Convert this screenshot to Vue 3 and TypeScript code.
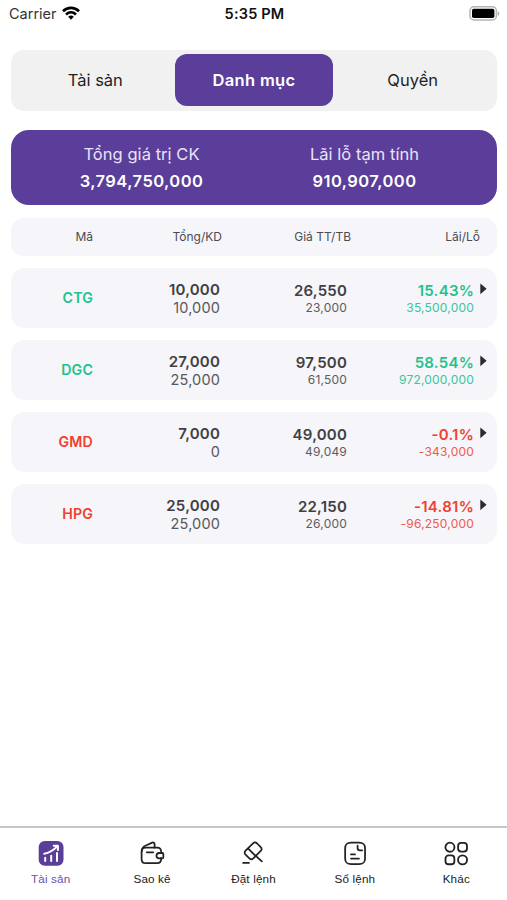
<script setup lang="ts">
import { ref } from 'vue'

interface Holding {
  code: string
  total: string
  available: string
  price: string
  average: string
  percent: string
  profit: string
  up: boolean
}

const segments: string[] = ['Tài sản', 'Danh mục', 'Quyền']
const activeSegment = ref(1)

const holdings: Holding[] = [
  { code: 'CTG', total: '10,000', available: '10,000', price: '26,550', average: '23,000', percent: '15.43%', profit: '35,500,000', up: true },
  { code: 'DGC', total: '27,000', available: '25,000', price: '97,500', average: '61,500', percent: '58.54%', profit: '972,000,000', up: true },
  { code: 'GMD', total: '7,000', available: '0', price: '49,000', average: '49,049', percent: '-0.1%', profit: '-343,000', up: false },
  { code: 'HPG', total: '25,000', available: '25,000', price: '22,150', average: '26,000', percent: '-14.81%', profit: '-96,250,000', up: false },
]

const tabs = [
  { id: 'assets', label: 'Tài sản' },
  { id: 'statement', label: 'Sao kê' },
  { id: 'order', label: 'Đặt lệnh' },
  { id: 'book', label: 'Sổ lệnh' },
  { id: 'more', label: 'Khác' },
]
const activeTab = ref('assets')
</script>

<template>
  <div class="screen">
    <header class="status">
      <div class="carrier">
        <span>Carrier</span>
        <svg width="18" height="14" viewBox="0 0 18 14" fill="none" stroke="#000" stroke-width="2.6">
          <path d="M1 5.2C5.5.8 12.5.8 17 5.2" />
          <path d="M4 8.5C7 5.7 11 5.7 14 8.5" />
          <path d="M6.2 10.8C8 9.2 10 9.2 11.8 10.8L9 13.7Z" fill="#000" stroke="none" />
        </svg>
      </div>
      <span class="time">5:35 PM</span>
      <svg class="battery" width="31" height="15" viewBox="0 0 31 15">
        <rect x="1" y=".8" width="26.4" height="13.2" rx="4" fill="#fff" stroke="#b4b4b4" stroke-width="1.5" />
        <rect x="3" y="2.8" width="22.4" height="9.2" rx="1.8" fill="#000" />
        <path d="M28.8 5.2c2 .8 2 3.8 0 4.6Z" fill="#aaa" />
      </svg>
    </header>

    <nav class="segments">
      <button v-for="(s, i) in segments" :key="s" class="segment" :class="{ active: i === activeSegment }" @click="activeSegment = i">{{ s }}</button>
    </nav>

    <section class="summary">
      <div class="figure">
        <span class="figure-label">Tổng giá trị CK</span>
        <strong class="figure-value">3,794,750,000</strong>
      </div>
      <div class="figure">
        <span class="figure-label">Lãi lỗ tạm tính</span>
        <strong class="figure-value">910,907,000</strong>
      </div>
    </section>

    <div class="head">
      <span>Mã</span><span>Tổng/KD</span><span>Giá TT/TB</span><span>Lãi/Lỗ</span>
    </div>

    <main class="list">
      <article v-for="h in holdings" :key="h.code" class="row" :class="h.up ? 'up' : 'down'">
        <span class="code">{{ h.code }}</span>
        <div class="cell volume">
          <b>{{ h.total }}</b>
          <span>{{ h.available }}</span>
        </div>
        <div class="cell">
          <b>{{ h.price }}</b>
          <small>{{ h.average }}</small>
        </div>
        <div class="cell result">
          <b>{{ h.percent }}</b>
          <small>{{ h.profit }}</small>
        </div>
        <svg class="arrow" width="7" height="12" viewBox="0 0 7 12"><path d="M.3 .6L6.6 5.8L.3 11.2Z" fill="#29292e" /></svg>
      </article>
    </main>

    <footer class="tabs">
      <button v-for="t in tabs" :key="t.id" class="tab" :class="{ current: t.id === activeTab }" @click="activeTab = t.id">
        <svg v-if="t.id === 'assets'" class="icon" viewBox="0 0 26 26">
          <rect x=".7" y=".9" width="24.8" height="24.8" rx="6" fill="#5b3e99" />
          <g fill="none" stroke="#fff" stroke-width="2" stroke-linecap="round">
            <path d="M7.2 17.8v3.2M13.2 15.8v5.2M19 13v8" />
            <path d="M6.2 13.8C11 12.9 15.3 10.4 19.3 6.4M15.7 5.7h4.2v4.2" stroke-linejoin="round" />
          </g>
        </svg>
        <svg v-else-if="t.id === 'statement'" class="icon line" viewBox="-1 -1.5 28 28">
          <path d="M22.8 12.3v-1.5c0-2.5-1.5-4-4-4H6c-2.6 0-4.2 1.6-4.2 4.2v8.2c0 2.7 1.5 4.3 4.2 4.3h12.7c2.6 0 4.1-1.5 4.1-4.2v-1.5" />
          <path d="M2 10.5C2.2 6.5 4 5.3 7 4.2l6.2-2.9c1.5-.5 2.6.4 2.6 2v3.3M7.4 11.8h6.9M24.2 12.5h-3.4c-4 .3-4 5.6 0 5.8h3.4c.7 0 1-.5 1-1.2v-3.4c0-.8-.3-1.2-1-1.2Z" />
        </svg>
        <svg v-else-if="t.id === 'order'" class="icon line" viewBox="-1 -1.5 28 28">
          <path d="M13 2.1 5 10c-1.4 1.4-1.4 2.8 0 4.2l4.1 4.1c1.4 1.4 2.8 1.4 4.2 0l8-8c1.4-1.4 1.4-2.8 0-4.2l-4.1-4.1c-1.4-1.3-2.9-1.3-4.2.1ZM7.6 7.6l8.6 8.4M15.7 15.3l6.8 6.2M2.4 23.2h6.2" />
        </svg>
        <svg v-else-if="t.id === 'book'" class="icon line" viewBox="-1 -1.5 28 28">
          <path d="M9 1.2h8.2c4.9 0 6.6 1.8 6.6 6.4v10.8c0 4.4-1.8 6-6.6 6H9c-4.8 0-6.6-1.6-6.6-6V7.6c0-4.4 1.8-6.4 6.6-6.4Z" />
          <path d="M15.8 4.6v2.5c0 1.7.8 2.5 2.5 2.5h2.4M8.7 14H13M8.7 18.5h8.6" />
        </svg>
        <svg v-else class="icon line" viewBox="-.5 -1 27 27">
          <circle cx="6.7" cy="6.5" r="4.7" />
          <rect x="15.2" y="1.9" width="9.2" height="9.2" rx="3.2" />
          <rect x="2.1" y="15" width="9.2" height="9.2" rx="3.2" />
          <circle cx="19.8" cy="19.6" r="4.7" />
        </svg>
        <span>{{ t.label }}</span>
      </button>
    </footer>
  </div>
</template>

<style>
body { margin: 0; background: #fff; }
</style>

<style scoped>
.screen { box-sizing: border-box; width: 507px; height: 900px; display: flex; flex-direction: column; background: #fff; font-family: Inter, sans-serif; color: #404044; overflow: hidden; }
button { appearance: none; border: 0; background: none; padding: 0; margin: 0; font: inherit; }
.status { height: 27px; box-sizing: border-box; padding: 0 7px 0 9px; display: grid; grid-template-columns: 1fr auto 1fr; align-items: center; color: #111; font-size: 14.5px; }
.carrier { display: flex; align-items: center; gap: 5px; }
.carrier span { color: #333; }
.carrier svg { margin-top: -2px; }
.time { font-weight: 600; letter-spacing: .2px; }
.battery { justify-self: end; margin-top: 0; }
.segments { height: 61px; flex: none; box-sizing: border-box; margin: 23px 10px 0 11px; padding: 4px 5px 5px; border-radius: 13px; background: #f1f1f2; display: grid; grid-template-columns: repeat(3, 1fr); }
.segment { font-size: 16.5px; color: #1f1f1f; border-radius: 12px; }
.segment.active { background: #5b3e99; color: #fff; font-weight: 600; letter-spacing: .32px; }
.summary { height: 75px; flex: none; box-sizing: border-box; margin: 19px 10px 0 11px; padding: 11px 0 0 19px; border-radius: 18px; background: #5b3e99; display: flex; }
.figure { width: 223px; text-align: center; color: #fff; display: flex; flex-direction: column; font-size: 16.5px; line-height: 26px; }
.figure-label { color: #e9e3f5; letter-spacing: .05px; }
.figure-value { font-weight: 600; line-height: 28px; letter-spacing: .45px; }
.head, .row { flex: none; box-sizing: border-box; background: #f5f5fa; display: grid; }
.head { height: 38px; margin: 13px 10px 0 11px; padding-bottom: 1px; grid-template-columns: 82px repeat(3, 129px); align-items: center; text-align: right; font-size: 12px; border-radius: 13px; color: #4c4c50; }
.list { margin: 12px 10px 0 11px; display: flex; flex-direction: column; gap: 12px; flex: 1; }
.row { height: 60px; border-radius: 14px; grid-template-columns: 82px repeat(3, 127px) auto; text-align: right; }
.code { align-self: center; padding-bottom: 1px; font-size: 14.2px; font-weight: 600; letter-spacing: .15px; }
.cell { display: flex; flex-direction: column; padding-top: 14px; }
.cell b { font-size: 15px; line-height: 18px; font-weight: 600; letter-spacing: .2px; }
.cell small { font-size: 12px; line-height: 15px; letter-spacing: .2px; color: #5c5c60; }
.result b { letter-spacing: .25px; }
.volume { padding-top: 13px; }
.volume span { font-size: 14.5px; line-height: 17px; letter-spacing: .15px; color: #58585c; }
.up .code, .up .result b { color: #1fc28c; }
.up .result small { color: #35c898; }
.down .code, .down .result b { color: #ef412e; }
.down .result small { color: #f05a49; }
.arrow { margin: 15px 0 0 6px; }
.tabs { height: 74px; flex: none; box-sizing: border-box; border-top: 2px solid #c7c7c8; display: grid; grid-template-columns: repeat(5, 1fr); }
.tab { display: flex; flex-direction: column; align-items: center; padding-top: 12px; font-family: "Liberation Sans", Arial, sans-serif; font-size: 11.7px; line-height: 14px; letter-spacing: .15px; color: #222; }
.tab span { margin-top: 6px; }
.tab.current { color: #6d50ae; }
.icon { width: 26px; height: 26px; }
.line { fill: none; stroke: #222; stroke-width: 1.9; stroke-linecap: round; stroke-linejoin: round; }
</style>
